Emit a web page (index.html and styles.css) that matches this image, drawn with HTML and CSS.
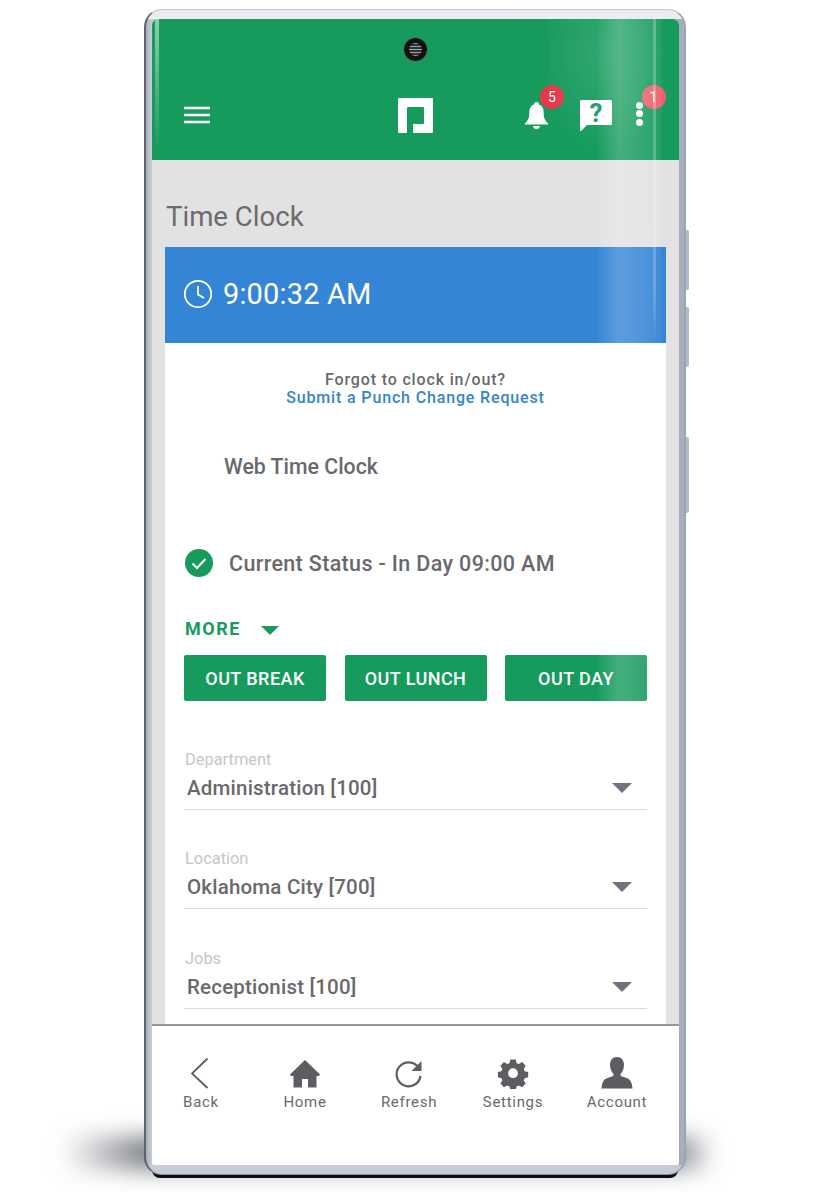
FILE: index.html
```html
<!DOCTYPE html>
<html lang="en">

<head>
    <meta charset="UTF-8">
    <meta name="viewport" content="width=device-width, initial-scale=1.0">
    <title>Time Clock</title>
    <link rel="stylesheet" href="styles.css">
</head>

<body>
    <div class="phone">
        <span class="side-btn side-btn-1"></span>
        <span class="side-btn side-btn-2"></span>
        <span class="side-btn side-btn-3"></span>
        <div class="screen">
            <header class="topbar">
                <span class="camera"><span class="camera-lens"></span></span>
                <svg class="menu-icon" width="26" height="18" viewBox="0 0 26 18">
                    <path d="M0 2h26M0 9h26M0 16h26" stroke="#fff" stroke-width="2.4" fill="none" />
                </svg>
                <svg class="logo" width="35" height="35" viewBox="0 0 35 35">
                    <path fill="#fff" d="M1 0h33a1 1 0 0 1 1 1v33a1 1 0 0 1-1 1H16a1 1 0 0 1-1-1v-7a1 1 0 0 1 1-1h9a1 1 0 0 0 1-1V10a1 1 0 0 0-1-1H10a1 1 0 0 0-1 1v24a1 1 0 0 1-1 1H1a1 1 0 0 1-1-1V1a1 1 0 0 1 1-1z" />
                </svg>
                <div class="top-actions">
                    <div class="action action-bell">
                        <svg width="23" height="27" viewBox="0 0 24 28">
                            <path fill="#fff" d="M12 0a2.500 2.500 0 0 1 2.500 2.600C18.500 3.800 19.500 7.500 19.500 11c0 5 1 8 4.500 11v1.500H0V22c3.500-3 4.500-6 4.500-11 0-3.500 1-7.200 5-8.400A2.500 2.500 0 0 1 12 0zM8.500 25h7a3.500 3 0 0 1-7 0z" />
                        </svg>
                        <span class="badge">5</span>
                    </div>
                    <div class="action action-help">
                        <svg width="32" height="31" viewBox="0 0 32 31">
                            <path fill="#fff" d="M1.500 0h29A1.500 1.500 0 0 1 32 1.500v22a1.500 1.500 0 0 1-1.500 1.500H7l-6 6H0V1.500A1.500 1.500 0 0 1 1.500 0z" />
                        </svg>
                        <span class="help-mark">?</span>
                    </div>
                    <div class="action action-more">
                        <span class="dot"></span>
                        <span class="dot"></span>
                        <span class="dot"></span>
                        <span class="badge badge-soft">1</span>
                    </div>
                </div>
            </header>

            <main class="content">
                <h1 class="page-title">Time Clock</h1>
                <section class="card">
                    <div class="clock-bar">
                        <svg width="30" height="30" viewBox="0 0 30 30">
                            <circle cx="15" cy="15" r="13.200" stroke="#fff" stroke-width="1.800" fill="none" />
                            <path d="M15 7v8.500l6 3.500" stroke="#fff" stroke-width="1.800" fill="none" />
                        </svg>
                        <span class="clock-time">9:00:32 AM</span>
                    </div>
                    <div class="card-body">
                        <p class="forgot">Forgot to clock in/out?<br><a href="#">Submit a Punch Change Request</a></p>
                        <h2 class="clock-name">Web Time Clock</h2>
                        <div class="status">
                            <svg width="28" height="28" viewBox="0 0 28 28">
                                <circle cx="14" cy="14" r="14" fill="#169b5d" />
                                <path d="M7.500 14.500l4.500 4.500 8.500-9" stroke="#fff" stroke-width="2" fill="none" />
                            </svg>
                            <span>Current Status - In Day 09:00 AM</span>
                        </div>
                        <div class="more">
                            <span>MORE</span>
                            <span class="caret caret-green"></span>
                        </div>
                        <div class="btn-row">
                            <button type="button" class="btn-punch">OUT BREAK</button>
                            <button type="button" class="btn-punch">OUT LUNCH</button>
                            <button type="button" class="btn-punch">OUT DAY</button>
                        </div>
                        <div class="field">
                            <label>Department</label>
                            <div class="select-row"><span>Administration [100]</span><span class="caret"></span></div>
                        </div>
                        <div class="field">
                            <label>Location</label>
                            <div class="select-row"><span>Oklahoma City [700]</span><span class="caret"></span></div>
                        </div>
                        <div class="field">
                            <label>Jobs</label>
                            <div class="select-row"><span>Receptionist [100]</span><span class="caret"></span></div>
                        </div>
                    </div>
                </section>
            </main>

            <nav class="bottom-nav">
                <a class="nav-item" href="#">
                    <svg width="34" height="32" viewBox="0 0 34 32">
                        <path d="M23.500 1.500L8 16.500l15.500 14.500" stroke="#5c5d60" stroke-width="1.800" fill="none" />
                    </svg>
                    <span>Back</span>
                </a>
                <a class="nav-item" href="#">
                    <svg width="34" height="32" viewBox="0 0 34 32">
                        <path fill="#5c5d60" d="M17 3L2 17.500l1 1.500h2.500v11.500h8.500V22h6v8.500h8.500V19H31l1-1.500z" />
                    </svg>
                    <span>Home</span>
                </a>
                <a class="nav-item" href="#">
                    <svg width="34" height="32" viewBox="0 0 34 32">
                        <path d="M26.500 10.500A12 12 0 1 0 28.500 19" stroke="#5c5d60" stroke-width="2.200" fill="none" />
                        <path fill="#5c5d60" d="M29.500 4v10h-10z" />
                    </svg>
                    <span>Refresh</span>
                </a>
                <a class="nav-item" href="#">
                    <svg width="34" height="32" viewBox="0 0 34 32">
                        <path fill="#5c5d60" fill-rule="evenodd" d="M14 1h6l1 4.200 2.500 1 3.700-2.200 4 4.200-2.200 3.500 1 2.600 4 1v5.800l-4 1-1 2.600 2.200 3.500-4 4.200-3.700-2.200-2.500 1-1 4.200h-6l-1-4.200-2.500-1-3.700 2.200-4-4.200 2.200-3.500-1-2.600-4-1v-5.800l4-1 1-2.600-2.200-3.500 4-4.200 3.700 2.200 2.500-1zM17 11a5.500 5.500 0 1 0 0 11 5.500 5.500 0 0 0 0-11z" transform="translate(1.900 1.500) scale(.89)" />
                    </svg>
                    <span>Settings</span>
                </a>
                <a class="nav-item" href="#">
                    <svg width="34" height="32" viewBox="0 0 34 32">
                        <path fill="#5c5d60" d="M17 0c4.500 0 7 3.500 7 8 0 3.500-1.500 7-3.500 9v1.500c1 1 3 1.500 6 2.500 4 1.300 5.500 4.500 6 10.500H1.500c.5-6 2-9.200 6-10.500 3-1 5-1.500 6-2.500V17c-2-2-3.500-5.500-3.500-9 0-4.500 2.500-8 7-8z" />
                    </svg>
                    <span>Account</span>
                </a>
            </nav>

            <span class="glare glare-top"></span>
            <span class="glare glare-band"></span>
            <span class="glare glare-edge"></span>
            <span class="glare glare-left"></span>
        </div>
    </div>
</body>

</html>
```

FILE: styles.css
```css
* {
    margin: 0;
    padding: 0;
    box-sizing: border-box;
}

html {
    background-color: #ffffff;
    color: #69696c;
    font-family: 'Roboto', 'Liberation Sans', sans-serif;
}

body {
    width: 832px;
    height: 1192px;
    overflow: hidden;
    padding: 9px 146px 0 144px;
}

/* phone body */
.phone {
    position: relative;
    height: 1166px;
    padding: 9px 5px 9px 6px;
    background:
        linear-gradient(#e8eaef 0, #eceef2 9px, transparent 9px),
        linear-gradient(transparent calc(100% - 9px), #c6ccd8 calc(100% - 9px)),
        linear-gradient(90deg, #a9b0bd 0, #c9ced8 6px, #a0abba calc(100% - 6px), #a8b1be 100%);
    border-radius: 18px;
    border: 1px solid #c3c7cf;
    border-left: 2px solid #5e6168;
    border-right: 2px solid #9aa4b2;
    border-bottom: 1px solid #8b93a1;
}

/* shadow on the floor under the phone */
.phone::before {
    content: "";
    position: absolute;
    z-index: -1;
    left: -85px;
    right: -30px;
    bottom: 4px;
    height: 34px;
    background: linear-gradient(90deg, rgba(40, 45, 55, 0), rgba(40, 45, 55, 0.6) 85px, rgba(40, 45, 55, 0.6) 94%, rgba(40, 45, 55, 0));
    filter: blur(11px);
}

.phone::after {
    content: "";
    position: absolute;
    z-index: -1;
    left: 6px;
    right: 6px;
    bottom: -4px;
    height: 8px;
    border-radius: 0 0 8px 8px;
    background-color: #0c0c0e;
}

.side-btn {
    position: absolute;
    right: -5px;
    width: 3px;
    background-color: #b4bbc6;
    border-radius: 0 2px 2px 0;
}

.side-btn-1 {
    top: 220px;
    height: 60px;
}

.side-btn-2 {
    top: 297px;
    height: 60px;
}

.side-btn-3 {
    top: 427px;
    height: 76px;
}

.screen {
    position: relative;
    display: flex;
    flex-direction: column;
    height: 100%;
    overflow: hidden;
    background-color: #ffffff;
    border-radius: 6px 6px 3px 3px;
}

/* top green bar */
.topbar {
    position: relative;
    display: flex;
    align-items: center;
    justify-content: space-between;
    flex: 0 0 141px;
    padding: 78px 15px 27px 32px;
    background-color: #169b5d;
}

.camera {
    position: absolute;
    top: 18px;
    left: 251px;
    display: flex;
    align-items: center;
    justify-content: center;
    width: 25px;
    height: 25px;
    border-radius: 50%;
    background-color: #101214;
    border: 1px solid #4d7a66;
}

.camera-lens {
    width: 13px;
    height: 13px;
    border-radius: 50%;
    background: repeating-linear-gradient(#9da2a6 0 1px, #2e3235 1px 3px);
}

.logo {
    position: absolute;
    top: 79px;
    left: 246px;
}

.top-actions {
    display: flex;
    align-items: center;
}

.action {
    position: relative;
    display: flex;
}

.action-bell {
    margin-right: 32px;
}

.action-help {
    margin-right: 24px;
}

.action-more {
    flex-direction: column;
    gap: 1.500px;
    margin-right: 21px;
    margin-bottom: 3px;
}

.dot {
    width: 7px;
    height: 7px;
    border-radius: 50%;
    background-color: #ffffff;
}

.badge {
    position: absolute;
    top: -17px;
    left: 15px;
    width: 24px;
    height: 24px;
    border-radius: 50%;
    background-color: #e6384a;
    color: #ffffff;
    font-size: 14px;
    line-height: 24px;
    text-align: center;
}

.badge-soft {
    left: 5.500px;
    background-color: #ee5e6d;
}

.help-mark {
    position: absolute;
    top: -3px;
    left: 0;
    width: 32px;
    color: #169b5d;
    font-size: 26px;
    font-weight: 700;
    line-height: 32px;
    text-align: center;
}

/* page content */
.content {
    flex: 1;
    min-height: 0;
    overflow: hidden;
    padding: 0 13px;
    background-color: #e2e2e3;
}

.page-title {
    height: 87px;
    padding: 39px 0 0 1px;
    font-size: 27.600px;
    font-weight: 400;
    line-height: 36px;
    color: #6b6b6d;
}

.card {
    background-color: #ffffff;
}

.clock-bar {
    display: flex;
    align-items: center;
    gap: 10px;
    height: 96px;
    padding: 0 0 2px 18px;
    background-color: #3585d6;
    color: #ffffff;
}

.clock-time {
    font-size: 29px;
    letter-spacing: 0.15px;
}

.card-body {
    height: 700px;
    padding: 27.500px 19px 0;
}

.forgot {
    font-size: 16px;
    font-weight: 500;
    line-height: 18.500px;
    letter-spacing: 0.85px;
    text-align: center;
}

.forgot a {
    color: #3585c9;
    text-decoration: none;
}

.clock-name {
    margin: 45.500px 0 0 40px;
    font-size: 21.300px;
    font-weight: 500;
    line-height: 28px;
}

.status {
    display: flex;
    align-items: center;
    gap: 16px;
    height: 28px;
    margin: 68px 0 0 1px;
    font-size: 21.500px;
    font-weight: 500;
    letter-spacing: 0.35px;
}

.more {
    display: flex;
    align-items: center;
    gap: 20px;
    margin: 40px 0 0 1px;
    color: #169b5d;
    font-size: 18px;
    font-weight: 700;
    letter-spacing: 1.500px;
    line-height: 24px;
}

.caret {
    width: 0;
    height: 0;
    border-left: 10px solid transparent;
    border-right: 10px solid transparent;
    border-top: 10px solid #707280;
}

.caret-green {
    margin-top: 3px;
    border-left-width: 9px;
    border-right-width: 9px;
    border-top: 9px solid #169b5d;
}

.btn-row {
    display: flex;
    justify-content: space-between;
    margin-top: 14px;
}

.btn-punch {
    width: 142px;
    height: 46px;
    border: none;
    border-radius: 2px;
    background-color: #169b5d;
    color: #ffffff;
    font-family: inherit;
    font-size: 18px;
    font-weight: 500;
    letter-spacing: 0.45px;
}

.field {
    height: 99.500px;
    padding-top: 39.500px;
}

.btn-row + .field {
    height: 108.500px;
    padding-top: 48.500px;
}

.field label {
    display: block;
    padding-left: 1px;
    font-size: 16.400px;
    line-height: 19px;
    color: #c6c6c8;
}

.select-row {
    display: flex;
    align-items: center;
    justify-content: space-between;
    height: 41px;
    padding: 0 15px 2px 3px;
    border-bottom: 1px solid #dcdcdd;
    font-size: 20.500px;
    font-weight: 500;
    letter-spacing: 0.2px;
}

/* bottom navigation */
.bottom-nav {
    display: flex;
    flex: 0 0 141px;
    gap: 10px;
    padding: 31px 0 0 2px;
    background-color: #ffffff;
    border-top: 2px solid #96979a;
}

.nav-item {
    display: flex;
    flex-direction: column;
    align-items: center;
    gap: 4px;
    width: 94px;
    color: #69696c;
    font-size: 15px;
    letter-spacing: 0.7px;
    text-decoration: none;
}

/* screen reflections */
.glare {
    position: absolute;
    pointer-events: none;
}

.glare-top {
    top: 0;
    right: 10px;
    width: 120px;
    height: 140px;
    background: radial-gradient(ellipse at 45% 25%, rgba(255, 255, 255, 0.12), rgba(255, 255, 255, 0) 70%);
}

.glare-band {
    top: 0;
    right: 17px;
    width: 66px;
    height: 690px;
    background: linear-gradient(90deg, rgba(255, 255, 255, 0), rgba(255, 255, 255, 0.2) 35%, rgba(255, 255, 255, 0.12) 75%, rgba(255, 255, 255, 0.05));
}

.glare-edge {
    top: 0;
    right: 23px;
    width: 3px;
    height: 320px;
    background: linear-gradient(rgba(255, 255, 255, 0.25), rgba(255, 255, 255, 0.2) 85%, rgba(255, 255, 255, 0));
}

.glare-left {
    top: 0;
    left: 3px;
    width: 4px;
    height: 130px;
    background: linear-gradient(rgba(255, 255, 255, 0.5), rgba(255, 255, 255, 0));
}
```
